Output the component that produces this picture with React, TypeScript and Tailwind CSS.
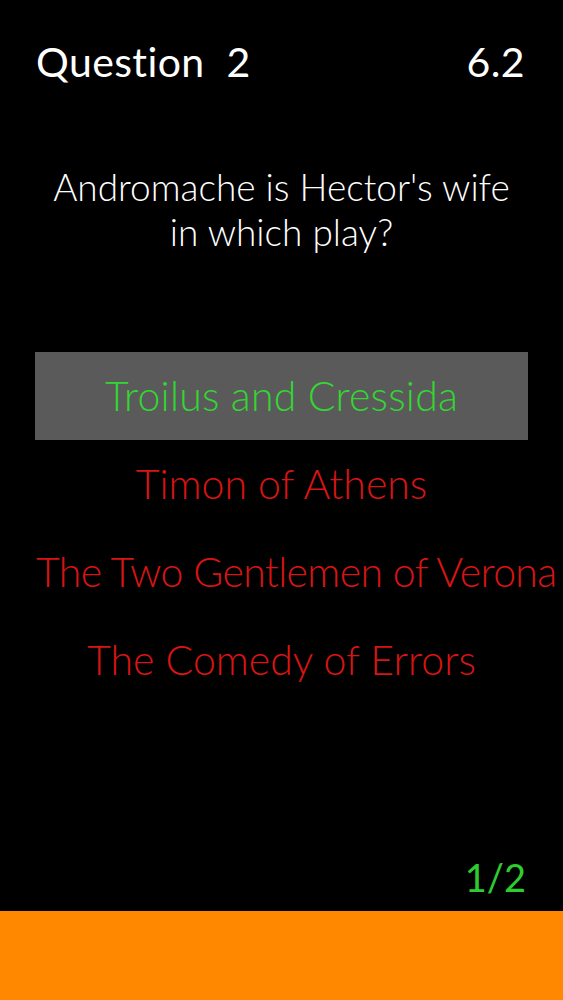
const answers = [
  { text: "Troilus and Cressida", correct: true },
  { text: "Timon of Athens", correct: false },
  { text: "The Two Gentlemen of Verona", correct: false },
  { text: "The Comedy of Errors", correct: false },
];

export default function App() {
  return (
    <div
      className="flex flex-col h-screen w-full overflow-hidden bg-black text-white [font-variant-ligatures:none]"
      style={{ fontFamily: "Lato, 'Helvetica Neue', sans-serif" }}
    >
      <div className="flex justify-between pl-[36px] pr-[38px] pt-[38px] text-[41px] leading-[48px] font-normal tracking-[0.4px]">
        <span className="whitespace-pre">Question  2</span>
        <span>6.2</span>
      </div>

      <div className="mt-[78px] text-center text-[37px] leading-[45px] font-light">
        <div>Andromache is Hector&apos;s wife</div>
        <div>in which play?</div>
      </div>

      <div className="mt-[98px] flex flex-col">
        {answers.map((a, i) => (
          <div
            key={i}
            className={
              "mx-[35px] h-[88px] flex items-center justify-center whitespace-nowrap text-[41px] leading-[88px] font-light " +
              (a.correct ? "bg-[#5a5a5a] text-[#33d633] tracking-[0.2px]" : "text-[#d81414]")
            }
          >
            {i === 2 ? (
              <span className="w-full text-left pl-[1px] tracking-[-0.65px]">{a.text}</span>
            ) : (
              <span>{a.text}</span>
            )}
          </div>
        ))}
      </div>

      <div className="flex-1" />

      <div className="flex justify-end pr-[37px] mb-[9px] text-[38px] leading-[50px] text-[#2ecc2e]">
        1/2
      </div>

      <div className="h-[89px] bg-[#ff8800] shrink-0" />
    </div>
  );
}
